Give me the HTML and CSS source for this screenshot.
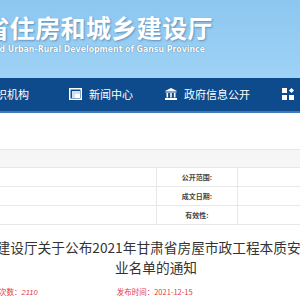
FILE: index.html
```html
<!DOCTYPE html>
<html lang="zh-CN">
<head>
  <meta charset="UTF-8">
  <meta name="viewport" content="width=device-width, initial-scale=1.0">
  <title>甘肃省住房和城乡建设厅</title>
  <link rel="stylesheet" href="styles.css">
</head>
<body>

  <header class="banner">
    <div class="logo">
      <h1>甘肃省住房和城乡建设厅</h1>
      <p>Department of Housing and Urban-Rural Development of Gansu Province</p>
    </div>
  </header>

  <nav class="menu">
    <a class="item item-first" href="#">
      <svg width="12" height="12" viewBox="0 0 12 12"><circle cx="6" cy="4" r="3" fill="#fff"/><rect x="1" y="8" width="10" height="4" fill="#fff"/></svg>
      组织机构
    </a>
    <a class="item" href="#">
      <svg width="13" height="12" viewBox="0 0 13 12"><rect x="0.75" y="0.75" width="11.5" height="10.5" fill="none" stroke="#fff" stroke-width="1.5"/><rect x="3" y="3" width="8" height="7" fill="#cfe0f2"/><rect x="6" y="6" width="5" height="4" fill="#fff"/></svg>
      新闻中心
    </a>
    <a class="item" href="#">
      <svg width="12" height="12" viewBox="0 0 12 12"><path d="M6 0 L12 3 L0 3 Z" fill="#fff"/><rect x="0.5" y="3.5" width="11" height="1" fill="#fff"/><rect x="1.5" y="5" width="1.6" height="4.5" fill="#fff"/><rect x="5.2" y="5" width="1.6" height="4.5" fill="#fff"/><rect x="8.9" y="5" width="1.6" height="4.5" fill="#fff"/><rect x="0" y="10" width="12" height="2" fill="#fff"/></svg>
      政府信息公开
    </a>
    <a class="item" href="#">
      <svg width="12" height="12" viewBox="0 0 12 12"><rect x="0" y="0" width="5" height="5" fill="#fff"/><path d="M9.5 0 L12 2.5 L9.5 5 L7 2.5 Z" fill="#fff"/><rect x="0" y="7" width="5" height="5" fill="#fff"/><rect x="7" y="7" width="5" height="5" fill="#fff"/></svg>
      互动交流
    </a>
  </nav>

  <main class="content">
    <div class="info">
      <div class="info-head"></div>
      <div class="info-row">
        <span class="cell cell-value"></span>
        <span class="cell label">公开范围:</span>
        <span class="cell cell-rest"></span>
      </div>
      <div class="info-row">
        <span class="cell cell-value"></span>
        <span class="cell label">成文日期:</span>
        <span class="cell cell-rest"></span>
      </div>
      <div class="info-row">
        <span class="cell cell-value"></span>
        <span class="cell label">有效性:</span>
        <span class="cell cell-rest"></span>
      </div>
    </div>

    <h2 class="title">
      <span class="title-line">甘肃省住房和城乡建设厅关于公布2021年甘肃省房屋市政工程本质安全生产示范企</span>
      <span class="title-end">业名单的通知</span>
    </h2>

    <div class="meta">
      <span>浏览次数：<em>2110</em></span>
      <span>发布时间：2021-12-15</span>
    </div>
  </main>

</body>
</html>
```

FILE: styles.css
```css
* {
  margin: 0;
  padding: 0;
  box-sizing: border-box;
}

body {
  width: 300px;
  overflow: hidden;
  background: #fff;
  font-family: "Noto Sans CJK SC", "Noto Sans", sans-serif;
}

/* cabecera */
.banner {
  height: 78px;
  background: linear-gradient(to bottom, #8cc7f0, #9fd2f6);
  overflow: hidden;
}

.logo {
  display: flex;
  flex-direction: column;
  align-items: flex-end;
  width: 254px;
  margin-left: -41px;
  padding-top: 13px;
}

.logo h1 {
  font-size: 25px;
  line-height: 28px;
  font-weight: bold;
  letter-spacing: 0.4px;
  color: #fff;
  white-space: nowrap;
  text-shadow: 1px 1px 2px rgba(40, 70, 110, 0.45);
}

.logo p {
  margin-top: 3px;
  margin-right: 8px;
  font-family: "DejaVu Sans Condensed", "DejaVu Sans", sans-serif;
  font-size: 8.7px;
  line-height: 10px;
  font-weight: bold;
  color: #fff;
  white-space: nowrap;
  text-shadow: 0 0 1px rgba(30, 50, 80, 0.8);
}

/* menu */
.menu {
  display: flex;
  align-items: center;
  gap: 32px;
  height: 35px;
  padding-bottom: 2px;
  background: #0d4b8c;
  border-bottom: 2px solid #3c7cbd;
  white-space: nowrap;
}

.item {
  display: flex;
  align-items: center;
  gap: 7px;
  font-size: 11px;
  color: #fff;
  text-decoration: none;
}

.item-first {
  margin-left: -34px;
  margin-right: 8px;
}

/* contenido */
.content {
  padding-top: 36px;
}

.info {
  width: 360px;
  margin-left: -20px;
  border-bottom: 1px solid #e8e8e8;
}

.info-head {
  height: 18px;
  background: #f6f6f6;
  border-top: 1px solid #e6e6e6;
}

.info-row {
  display: flex;
  height: 19px;
  border-top: 1px solid #e8e8e8;
}

.cell-value {
  flex: 0 0 176px;
}

.label {
  flex: 0 0 82px;
  display: flex;
  align-items: center;
  justify-content: center;
  border-left: 1px solid #e8e8e8;
  border-right: 1px solid #e8e8e8;
  font-size: 7px;
  font-weight: bold;
  color: #444;
}

.cell-rest {
  flex: 1;
}

.title {
  margin-top: 12px;
  font-size: 13.7px;
  line-height: 20px;
  font-weight: normal;
  color: #333;
}

.title-line {
  display: block;
  margin-left: -113px;
  white-space: nowrap;
}

.title-end {
  display: block;
  width: 312px;
  text-align: center;
}

.meta {
  display: flex;
  gap: 79px;
  margin-top: 10px;
  margin-left: -16px;
  font-size: 7.5px;
  line-height: 10px;
  color: #e3393c;
}

.meta em {
  font-family: "Liberation Sans", sans-serif;
}
```
